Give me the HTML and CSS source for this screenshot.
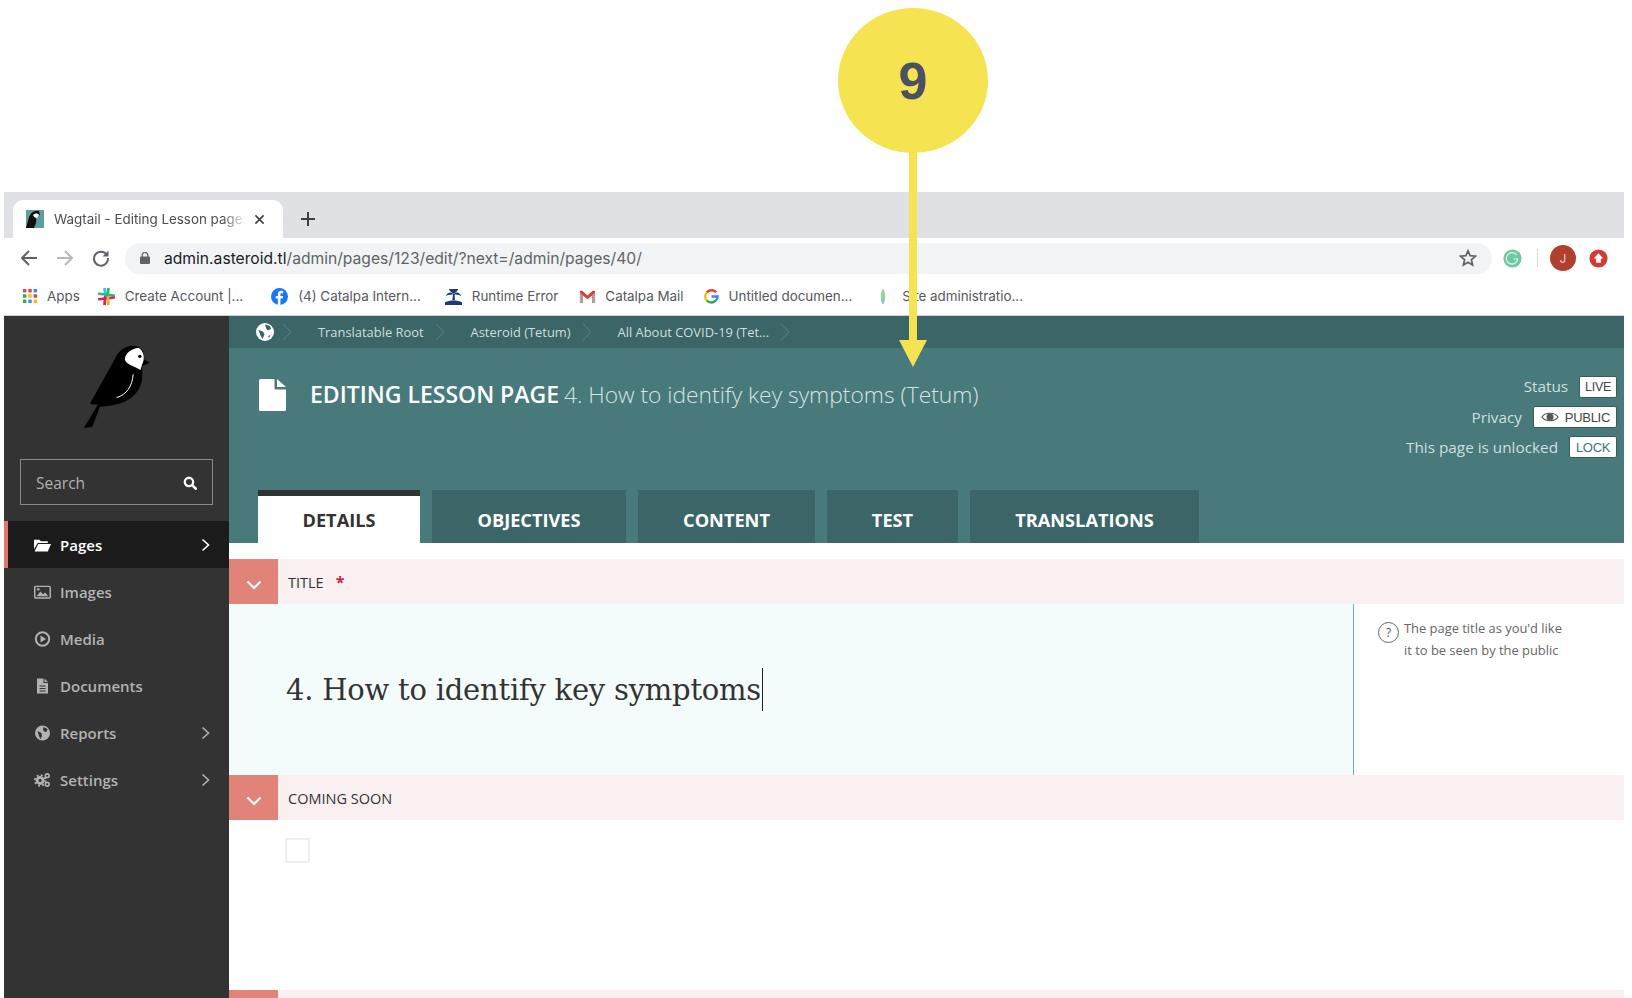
FILE: index.html
```html
<!DOCTYPE html>
<html lang="en">
<head>
<meta charset="utf-8">
<title>Wagtail - Editing Lesson page</title>
<link rel="stylesheet" href="styles.css">
</head>
<body>
<div class="spacer"></div>
<div class="window">
  <div class="strip">
    <div class="tab">
      <svg class="favicon" viewBox="0 0 18 18"><rect width="18" height="18" fill="#5f9ea0"/><path d="M0 18 L3 7 C5 2 9 0 13 1 L14 5 L11 6 C9 6 11 10 10 13 L8 18Z" fill="#111"/><path d="M7 5 C9 3 12 3 13 5 L11 8 C9 8 8 7 7 5Z" fill="#fff"/></svg>
      <span class="tab-title">Wagtail - Editing Lesson page:</span>
      <svg class="tab-x" viewBox="0 0 12 12"><path d="M1.5 1.5 L10.5 10.5 M10.5 1.5 L1.5 10.5" stroke="#3c4043" stroke-width="1.7"/></svg>
    </div>
    <svg class="tab-plus" viewBox="0 0 14 14"><path d="M7 0 V14 M0 7 H14" stroke="#3c4043" stroke-width="2"/></svg>
  </div>
  <div class="toolbar">
    <svg class="nav" viewBox="0 0 18 18"><path d="M17 9 H2 M9 2 L2 9 L9 16" fill="none" stroke="#5f6368" stroke-width="2"/></svg>
    <svg class="nav" viewBox="0 0 18 18"><path d="M1 9 H16 M9 2 L16 9 L9 16" fill="none" stroke="#b4b7bb" stroke-width="2"/></svg>
    <svg class="nav" viewBox="0 0 18 18"><path d="M15 6 A7 7 0 1 0 16 9" fill="none" stroke="#5f6368" stroke-width="2"/><path d="M16.5 1.5 V7.5 H10.5Z" fill="#5f6368"/></svg>
    <div class="address">
      <svg class="lock" viewBox="0 0 10 12"><rect y="4.5" width="10" height="7.5" rx="1" fill="#5f6368"/><path d="M2.2 5 V3.2 A2.8 2.8 0 0 1 7.8 3.2 V5" fill="none" stroke="#5f6368" stroke-width="1.3"/></svg>
      <span class="url"><span class="host">admin.asteroid.tl</span>/admin/pages/123/edit/?next=/admin/pages/40/</span>
      <svg class="star" viewBox="0 0 18 18"><path d="M9 1.8 L11.1 6.7 L16.4 7.2 L12.4 10.7 L13.6 15.9 L9 13.2 L4.4 15.9 L5.6 10.7 L1.6 7.2 L6.9 6.7Z" fill="none" stroke="#5f6368" stroke-width="1.7"/></svg>
    </div>
    <svg class="ext-g" viewBox="0 0 20 20"><circle cx="10" cy="10" r="9.5" fill="#6fc7a3"/><path d="M14.5 6.5 A6 6 0 1 0 15.5 10.5 H11" fill="none" stroke="#e4f5ee" stroke-width="1.2"/></svg>
    <span class="tool-div"></span>
    <span class="avatar">J</span>
    <svg class="ext-up" viewBox="0 0 20 20"><circle cx="10" cy="10" r="9.5" fill="#d23c36"/><path d="M10 4.5 L15 10 H12.5 V14.5 H7.5 V10 H5Z" fill="#fff"/></svg>
  </div>
  <div class="bookmarks">
    <span class="bm bm-apps">
      <svg class="bm-i" viewBox="0 0 16 16"><g fill="#d9503f"><rect x="1" y="1" width="3.4" height="3.4"/></g><g fill="#ea4335"><rect x="6.3" y="1" width="3.4" height="3.4"/></g><g fill="#4285f4"><rect x="11.6" y="1" width="3.4" height="3.4"/></g><g fill="#34a853"><rect x="1" y="6.3" width="3.4" height="3.4"/></g><g fill="#fbbc05"><rect x="6.3" y="6.3" width="3.4" height="3.4"/></g><g fill="#ea4335"><rect x="11.6" y="6.3" width="3.4" height="3.4"/></g><g fill="#34a853"><rect x="1" y="11.6" width="3.4" height="3.4"/></g><g fill="#4285f4"><rect x="6.3" y="11.6" width="3.4" height="3.4"/></g><g fill="#fbbc05"><rect x="11.6" y="11.6" width="3.4" height="3.4"/></g></svg>
      Apps</span>
    <span class="bm bm-slack">
      <svg class="bm-i" viewBox="0 0 18 18"><path d="M7 1 L8 9" stroke="#36c5f0" stroke-width="3" stroke-linecap="round"/><path d="M11 1 L10 9" stroke="#2eb67d" stroke-width="3" stroke-linecap="round"/><path d="M1 6 L17 8" stroke="#2eb67d" stroke-width="2.6" stroke-linecap="round"/><path d="M1 12 L17 10" stroke="#e01e5a" stroke-width="2.6" stroke-linecap="round"/><path d="M7.5 10 L7 17" stroke="#e01e5a" stroke-width="3" stroke-linecap="round"/><path d="M10.5 10 L11 17" stroke="#ecb22e" stroke-width="3" stroke-linecap="round"/></svg>
      Create Account |...</span>
    <span class="bm bm-fb">
      <svg class="bm-i" viewBox="0 0 18 18"><circle cx="9" cy="9" r="9" fill="#1877f2"/><path d="M10 18 V11 H12.3 L12.8 8.4 H10 V6.8 C10 6 10.4 5.5 11.3 5.5 H12.9 V3.2 C11.9 3 11.2 3 10.6 3 C8.6 3 7.3 4.2 7.3 6.4 V8.4 H5 V11 H7.3 V18Z" fill="#fff"/></svg>
      (4) Catalpa Intern...</span>
    <span class="bm bm-isl">
      <svg class="bm-i" viewBox="0 0 18 18"><path d="M0 15 C5 12.500 13 12.500 18 15 V18 H0Z" fill="#1e3a6e"/><path d="M7.800 13 L8.500 6 H10.200 L10.500 13Z" fill="#1e3a6e"/><path d="M9.300 6.500 C6 3.500 2.500 4.500 1 8.500 C4 6.500 7 7 9.300 6.500Z M9.300 6.500 C12.500 3.500 15.500 4.500 17 8.500 C14 6.500 11.500 7 9.300 6.500Z M9.300 6 C7 5 5 3 4 1 H14 C13 3 11.500 5 9.300 6Z" fill="#1e3a6e"/></svg>
      Runtime Error</span>
    <span class="bm bm-mail">
      <svg class="bm-i" viewBox="0 0 18 14"><path d="M1 1 V14 H4 V6 L9 10 L14 6 V14 H17 V1 L14.500 1 L9 6 L3.500 1Z" fill="#d0453a"/><path d="M1 14 V3 L4 5.500 V14Z M17 14 V3 L14 5.500 V14Z" fill="#a9a4a0"/></svg>
      Catalpa Mail</span>
    <span class="bm bm-g">
      <svg class="bm-i" viewBox="0 0 16 16"><path d="M13 3.500 A6.500 6.500 0 0 0 3 3.700" fill="none" stroke="#ea4335" stroke-width="2.600"/><path d="M3 3.700 A6.500 6.500 0 0 0 3 12.300" fill="none" stroke="#fbbc05" stroke-width="2.600"/><path d="M3 12.300 A6.500 6.500 0 0 0 12.500 12.500" fill="none" stroke="#34a853" stroke-width="2.600"/><path d="M12.500 12.500 C14 11.300 14.500 9.700 14.500 8 H8" fill="none" stroke="#4285f4" stroke-width="2.600"/></svg>
      Untitled documen...</span>
    <span class="bm bm-site">
      <svg class="bm-i bm-leaf" viewBox="0 0 6 16"><path d="M3 0 C6 4 6 12 3 16 C0 12 0 4 3 0Z" fill="#9ccf9a"/><path d="M3 9 C5 11 4.500 14 3 16 C1.500 14 1 11 3 9Z" fill="#7fcbd6"/></svg>
      Site administratio...</span>
  </div>
  <div class="app">
    <aside class="sidebar">
      <div class="logo">
        <svg class="bird" viewBox="248 90 200 246"><path d="M415 92 C385 85 360 95 345 125 L268 264 L292 266 L250 336 L276 332 L298 272 C360 270 415 250 425 190 L425 150 L447 140 L430 130 L428 105Z" fill="#000"/><path d="M414 95 C395 98 375 108 373 130 C375 145 400 150 420 162 L425 145 C433 130 432 105 414 95Z" fill="#fff"/><circle cx="418" cy="121" r="5" fill="#000"/><path d="M398 175 C395 210 380 235 348 245" fill="none" stroke="#fff" stroke-width="3"/></svg>
      </div>
      <div class="search">
        <span>Search</span>
        <svg class="search-i" viewBox="0 0 16 16"><circle cx="6.800" cy="6.800" r="4.800" fill="none" stroke="#fff" stroke-width="2.600"/><path d="M10.500 10.500 L14.500 14.500" stroke="#fff" stroke-width="3" stroke-linecap="round"/></svg>
      </div>
      <nav class="menu">
        <a class="item active">
          <svg class="m-i" viewBox="0 0 16 14"><path d="M0 2 H5 L6.500 3.500 H13 V5 H3.500 L0 11Z M4 6 H16 L13 13 H0.500Z" fill="currentColor"/></svg>
          <span class="label">Pages</span>
          <svg class="more" viewBox="0 0 9 14"><path d="M1.500 1.500 L7.500 7 L1.500 12.500" fill="none" stroke="currentColor" stroke-width="1.600"/></svg>
        </a>
        <a class="item">
          <svg class="m-i" viewBox="0 0 16 14"><rect x="0.700" y="1.700" width="14.600" height="11" rx="1" fill="none" stroke="currentColor" stroke-width="1.400"/><path d="M2.500 11 L6 6.500 L8.500 9 L10.500 7.500 L13.500 11Z" fill="currentColor"/><circle cx="4" cy="4.500" r="1.200" fill="currentColor"/></svg>
          <span class="label">Images</span>
        </a>
        <a class="item">
          <svg class="m-i" viewBox="0 0 16 16"><circle cx="8" cy="8" r="6.700" fill="none" stroke="currentColor" stroke-width="2"/><path d="M6 4.500 L11.500 8 L6 11.500Z" fill="currentColor"/></svg>
          <span class="label">Media</span>
        </a>
        <a class="item">
          <svg class="m-i" viewBox="0 0 16 16"><path d="M2.500 0.500 H9 V5 H13.500 V15.500 H2.500Z M10 0.500 L13.500 4 H10Z" fill="currentColor"/><path d="M5 8 H11 M5 10.500 H11 M5 13 H11" stroke="#333" stroke-width="1"/></svg>
          <span class="label">Documents</span>
        </a>
        <a class="item">
          <svg class="m-i" viewBox="0 0 16 16"><circle cx="8" cy="8" r="7.500" fill="currentColor"/><path d="M9 2 L13 4 L12 7 L9.500 6.500 L8.500 4.500Z M3 6 L7 8 L7.500 11 L6 14 L4.500 11Z" fill="#333"/></svg>
          <span class="label">Reports</span>
          <svg class="more" viewBox="0 0 9 14"><path d="M1.500 1.500 L7.500 7 L1.500 12.500" fill="none" stroke="currentColor" stroke-width="1.600"/></svg>
        </a>
        <a class="item">
          <svg class="m-i" viewBox="0 0 18 16"><circle cx="6.500" cy="8.500" r="3.200" fill="none" stroke="currentColor" stroke-width="3"/><circle cx="6.500" cy="8.500" r="5.600" fill="none" stroke="currentColor" stroke-width="1.900" stroke-dasharray="2 2.400"/><circle cx="14" cy="3.500" r="2" fill="none" stroke="currentColor" stroke-width="1.700"/><circle cx="14" cy="12.500" r="2" fill="none" stroke="currentColor" stroke-width="1.700"/></svg>
          <span class="label">Settings</span>
          <svg class="more" viewBox="0 0 9 14"><path d="M1.500 1.500 L7.500 7 L1.500 12.500" fill="none" stroke="currentColor" stroke-width="1.600"/></svg>
        </a>
      </nav>
    </aside>
    <main class="main">
      <div class="crumbs">
        <svg class="globe" viewBox="0 0 18 18"><circle cx="9" cy="9" r="9" fill="#fff"/><path d="M9 1.500 L14 3 L15 6 L11.500 7.500 L10 5Z M2.500 7 L7 8.500 L8.500 11.500 L6.500 16 L4.500 12.500Z M12 13 L14.500 12 L13 15Z" fill="#3a6466"/></svg>
        <svg class="sep sep-first" viewBox="0 0 10 18"><path d="M1 1 L9 9 L1 17" fill="none" stroke="#4a7a7c" stroke-width="1.200"/></svg>
        <span class="crumb">Translatable Root</span>
        <svg class="sep" viewBox="0 0 10 18"><path d="M1 1 L9 9 L1 17" fill="none" stroke="#4a7a7c" stroke-width="1.200"/></svg>
        <span class="crumb">Asteroid (Tetum)</span>
        <svg class="sep" viewBox="0 0 10 18"><path d="M1 1 L9 9 L1 17" fill="none" stroke="#4a7a7c" stroke-width="1.200"/></svg>
        <span class="crumb">All About COVID-19 (Tet...</span>
        <svg class="sep" viewBox="0 0 10 18"><path d="M1 1 L9 9 L1 17" fill="none" stroke="#4a7a7c" stroke-width="1.200"/></svg>
      </div>
      <header class="head">
        <div class="head-top">
          <svg class="doc" viewBox="0 0 27 32"><path d="M1.500 0 H15.500 V10.500 H27 V30.500 A1.500 1.500 0 0 1 25.500 32 H1.500 A1.500 1.500 0 0 1 0 30.500 V1.500 A1.500 1.500 0 0 1 1.500 0Z M18 0 L27 8 H18Z" fill="#fff"/></svg>
          <h1 class="title"><span class="title-a">EDITING LESSON PAGE</span> <span class="title-b">4. How to identify key symptoms (Tetum)</span></h1>
          <div class="status">
            <div class="st-row"><span class="st-l st-up">Status</span><span class="st-box">LIVE</span></div>
            <div class="st-row"><span class="st-l">Privacy</span><span class="st-box st-pub"><svg class="eye" viewBox="0 0 18 12"><path d="M1 6 C4 1 14 1 17 6 C14 11 4 11 1 6Z" fill="none" stroke="#555" stroke-width="1.200"/><circle cx="9" cy="6" r="3.500" fill="#555"/></svg>PUBLIC</span></div>
            <div class="st-row"><span class="st-l">This page is unlocked</span><span class="st-box st-lock">LOCK</span></div>
          </div>
        </div>
        <div class="tabs">
          <span class="t t-active t-details">DETAILS</span>
          <span class="t t-obj">OBJECTIVES</span>
          <span class="t t-con">CONTENT</span>
          <span class="t t-test">TEST</span>
          <span class="t t-trans">TRANSLATIONS</span>
        </div>
      </header>
      <section class="field-first">
        <div class="fhead">
          <span class="fchev"><svg class="chev" viewBox="0 0 16 10"><path d="M1.500 1.500 L8 8 L14.500 1.500" fill="none" stroke="#fff" stroke-width="2.200"/></svg></span>
          <span class="flabel">TITLE</span><span class="req">*</span>
        </div>
        <div class="fbody">
          <div class="input"><span class="input-text">4. How to identify key symptoms</span><span class="caret"></span></div>
          <div class="help">
            <span class="qm">?</span>
            <p class="help-text">The page title as you'd like<br>it to be seen by the public</p>
          </div>
        </div>
      </section>
      <section>
        <div class="fhead">
          <span class="fchev"><svg class="chev" viewBox="0 0 16 10"><path d="M1.500 1.500 L8 8 L14.500 1.500" fill="none" stroke="#fff" stroke-width="2.200"/></svg></span>
          <span class="flabel">COMING SOON</span>
        </div>
        <div class="fbody2"><span class="check"></span></div>
      </section>
      <section>
        <div class="fhead"><span class="fchev"></span></div>
      </section>
    </main>
  </div>
</div>
<div class="badge">9</div>
<svg class="pointer" viewBox="0 0 28 215"><rect x="10" y="0" width="8" height="190" fill="#f6e351"/><path d="M0 188 H28 L14 215Z" fill="#f6e351"/></svg>
</body>
</html>
```
FILE: styles.css
```css
html, body { margin: 0; padding: 0; }
body {
  position: relative;
  width: 1632px;
  height: 998px;
  overflow: hidden;
  background: #fff;
  font-family: "Open Sans", sans-serif;
}
.spacer { height: 192px; }
.window { margin-left: 4px; width: 1620px; }

/* browser chrome */
.strip {
  height: 46px;
  background: #dfe1e5;
  display: flex;
  align-items: flex-end;
  padding-left: 9px;
  box-sizing: border-box;
}
.tab {
  width: 270px;
  height: 38px;
  background: #fff;
  border-radius: 10px 10px 0 0;
  display: flex;
  align-items: center;
  padding-left: 13px;
  box-sizing: border-box;
}
.favicon { width: 18px; height: 18px; flex: none; }
.tab-title {
  margin-left: 10px;
  width: 192px;
  font: 13.400px Inter, sans-serif;
  color: #4a4d51;
  white-space: nowrap;
  overflow: hidden;
  -webkit-mask-image: linear-gradient(to right, #000 88%, transparent 100%);
  mask-image: linear-gradient(to right, #000 88%, transparent 100%);
}
.tab-x { width: 11px; height: 11px; margin-left: 8px; }
.tab-plus { width: 14px; height: 14px; margin: 0 0 12px 18px; }
.toolbar {
  height: 40px;
  display: flex;
  align-items: center;
  padding-left: 16px;
  box-sizing: border-box;
}
.nav { width: 18px; height: 18px; margin-right: 18px; flex: none; }
.address {
  width: 1367px;
  height: 31px;
  margin-left: -3px;
  border-radius: 16px;
  background: #f1f3f4;
  display: flex;
  align-items: center;
  padding-left: 15px;
  box-sizing: border-box;
}
.lock { width: 10px; height: 12px; flex: none; }
.url { margin-left: 14px; font: 15.650px Inter, sans-serif; color: #5f6368; white-space: nowrap; }
.host { color: #202124; }
.star { width: 18px; height: 18px; margin-left: auto; margin-right: 15px; }
.ext-g { width: 19px; height: 19px; margin-left: 11px; }
.tool-div { width: 1px; height: 18px; background: #d8d8d8; margin-left: 15px; }
.avatar {
  width: 26px;
  height: 26px;
  border-radius: 50%;
  background: #b13f2d;
  color: #f0d0c8;
  font: 12px Inter, sans-serif;
  display: flex;
  align-items: center;
  justify-content: center;
  margin-left: 12px;
}
.ext-up { width: 19px; height: 19px; margin-left: 13px; }
.bookmarks {
  height: 38px;
  box-sizing: border-box;
  border-bottom: 1px solid #cfd1d5;
  display: flex;
  align-items: center;
  padding-left: 18px;
  padding-bottom: 1px;
  font: 13.400px Inter, sans-serif;
  color: #55585c;
  white-space: nowrap;
}
.bm { display: flex; align-items: center; gap: 9px; }
.bm-i { width: 17px; height: 17px; flex: none; }
.bm-apps .bm-i { width: 16px; height: 16px; }
.bm-slack { margin-left: 18px; gap: 10px; }
.bm-fb { margin-left: 28px; gap: 10px; }
.bm-isl { margin-left: 24px; gap: 10px; }
.bm-mail { margin-left: 21px; }
.bm-g { margin-left: 20px; gap: 10px; }
.bm-g .bm-i { width: 15px; height: 15px; }
.bm-site { margin-left: 28px; gap: 16px; }
.bm-leaf { width: 6px; }

/* app */
.app { display: flex; height: 682px; overflow: hidden; }
.sidebar { width: 225px; flex: none; background: #333; color: #aaa; }
.logo { height: 143px; box-sizing: border-box; padding-top: 30px; display: flex; justify-content: center; }
.bird { width: 67px; height: 82px; }
.search {
  margin-left: 16px;
  width: 193px;
  height: 46px;
  box-sizing: border-box;
  border: 1px solid #8a8a8a;
  display: flex;
  align-items: center;
  justify-content: space-between;
  padding: 1px 15px 0;
  font-size: 15.500px;
  color: #b0b0b0;
}
.search-i { width: 14px; height: 14px; }
.menu { margin-top: 16px; }
.item {
  height: 47px;
  display: flex;
  align-items: center;
  padding-left: 30px;
  padding-right: 19px;
  font-size: 15px;
  font-weight: 600;
  color: #b2b2b2;
  box-sizing: border-box;
}
.item.active { background: #1b1b1b; color: #fff; border-left: 4px solid #e2766d; padding-left: 26px; }
.m-i { width: 17px; height: 16px; flex: none; }
.label { margin-left: 9px; }
.more { width: 9px; height: 14px; margin-left: auto; }

.main { flex: 1; min-width: 0; }
.crumbs {
  height: 32px;
  background: #3b6567;
  display: flex;
  align-items: center;
  padding-left: 27px;
  padding-bottom: 1px;
  box-sizing: border-box;
  font-size: 12.900px;
  color: #cfdedd;
}
.globe { width: 18px; height: 18px; flex: none; }
.sep { width: 10px; height: 18px; flex: none; margin: 0 26px 0 11px; }
.sep-first { margin: 0 26px 0 8px; }
.head { background: #487a7c; height: 195px; }
.head-top { height: 142px; display: flex; padding: 0 7px 0 30px; box-sizing: border-box; }
.doc { width: 27px; height: 32px; margin-top: 31px; flex: none; }
.title { margin: 30px 0 0 24px; font-size: 22.800px; font-weight: 300; white-space: nowrap; line-height: 32px; }
.title-a { color: #fff; font-weight: 600; font-size: 23px; }
.title-b { color: #d5e4e3; margin-left: -1px; }
.status { margin-left: auto; padding-top: 28px; display: flex; flex-direction: column; align-items: flex-end; gap: 8px; }
.st-row { height: 22px; display: flex; align-items: center; }
.st-l { font-size: 15.300px; color: #cfdfde; margin-right: 11px; }
.st-up { margin-bottom: 3px; }
.st-box {
  height: 22px;
  box-sizing: border-box;
  background: #fff;
  border: 1px solid #3a5a5c;
  border-radius: 2px;
  padding: 0 5px;
  display: flex;
  align-items: center;
  font: 12.500px "Liberation Sans", sans-serif;
  color: #444;
  letter-spacing: -0.300px;
}
.st-pub { width: 84px; padding: 0 6px 0 7px; justify-content: space-between; font-size: 13px; }
.st-lock { width: 48px; justify-content: center; color: #3f7476; font-size: 13px; }
.eye { width: 18px; height: 12px; }
.tabs { height: 53px; display: flex; padding-left: 29px; }
.t {
  height: 53px;
  background: #3b6567;
  color: #fff;
  font-size: 18.200px;
  font-weight: 700;
  display: flex;
  align-items: center;
  justify-content: center;
  box-sizing: border-box;
  margin-right: 12px;
  padding-top: 6px;
}
.t-active { background: #fff; color: #333; border-top: 6px solid #333; padding-top: 0; margin-right: 12px; }
.t-details { width: 162px; }
.t-obj { width: 194px; }
.t-con { width: 177px; }
.t-test { width: 131px; }
.t-trans { width: 229px; }
.field-first { margin-top: 16px; }
.fhead { height: 45px; background: #faf0f1; display: flex; align-items: center; }
.fchev { width: 49px; height: 45px; background: #e2837a; display: flex; align-items: center; justify-content: center; flex: none; }
.chev { width: 16px; height: 10px; margin-top: 6px; }
.flabel { margin-left: 10px; padding-top: 2px; font-size: 14.500px; color: #333; }
.req { margin-left: 12px; color: #c0293a; font-size: 16px; font-weight: 700; }
.fbody { display: flex; height: 171px; }
.input {
  width: 1125px;
  box-sizing: border-box;
  background: #f3fcfb;
  border-right: 1px solid #5fb5b8;
  padding-left: 57px;
  display: flex;
  align-items: center;
  height: 171px;
}
.input-text { font-family: "DejaVu Serif", serif; font-size: 29px; color: #333; white-space: nowrap; letter-spacing: -0.230px; }
.caret { width: 1px; height: 43px; background: #222; margin-left: 1px; }
.help { display: flex; padding: 17px 0 0 24px; }
.qm {
  width: 19px;
  height: 19px;
  border: 1px solid #666;
  border-radius: 50%;
  display: flex;
  align-items: center;
  justify-content: center;
  font-size: 12px;
  color: #555;
  margin-top: 1px;
  flex: none;
}
.help-text { margin: -4px 0 0 5px; font-size: 12.900px; line-height: 22px; color: #666; white-space: nowrap; }
.fbody2 { height: 170px; padding: 18px 0 0 56px; box-sizing: border-box; }
.check { display: block; width: 25px; height: 25px; box-sizing: border-box; border: 2px solid #eee; }

/* annotation over the page */
.badge {
  position: absolute;
  left: 838px;
  top: 8px;
  width: 150px;
  height: 145px;
  border-radius: 50%;
  background: #f6e351;
  color: #4b5160;
  font: 700 52px/147px "Liberation Sans", sans-serif;
  text-align: center;
}
.pointer { position: absolute; left: 899px; top: 152px; width: 28px; height: 215px; }
```
